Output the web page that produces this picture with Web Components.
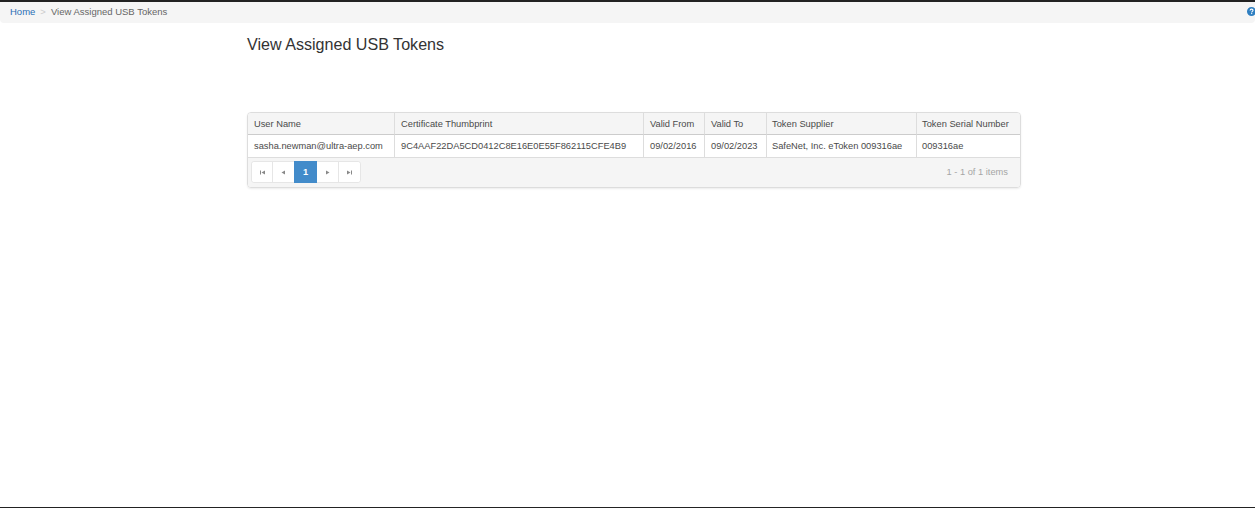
<!DOCTYPE html>
<html>
<head>
<meta charset="utf-8">
<title>View Assigned USB Tokens</title>
<style>
html, body { margin: 0; padding: 0; height: 100%; overflow: hidden; background: #fff; }
body { font-family: "Liberation Sans", Arial, sans-serif; font-size: 10px; color: #333; }
</style>
</head>
<body>
<app-shell>
    <bread-crumb current="View Assigned USB Tokens"></bread-crumb>
    <token-view heading="View Assigned USB Tokens"></token-view>
</app-shell>

<script>
class AppShell extends HTMLElement {
    constructor() {
        super()
        this.attachShadow({ mode: 'open' }).innerHTML = `
    <style>
        :host { display: flex; flex-direction: column; height: 508px; box-sizing: border-box;
                border-top: 2px solid #222; border-bottom: 1px solid #222; }
    </style>
    <slot></slot>`
    }
}

class BreadCrumb extends HTMLElement {
    constructor() {
        super()
        this.attachShadow({ mode: 'open' }).innerHTML = `
    <style>
        :host { display: flex; align-items: center; height: 21px; box-sizing: border-box; padding: 0 0 2px 10px; background: #f5f5f5;
                border-radius: 0 0 4px 4px; font-size: 9.5px; color: #666; }
        a { color: #2a6fb5; text-decoration: none; }
        .sep { color: #ccc; margin: 0 5px 0 5px; }
        .help { margin-left: auto; width: 9px; height: 9px; margin-right: -1px; display: block; }
    </style>
    <a href="#">Home</a><span class="sep">&gt;</span><span>${this.getAttribute('current')}</span>
    <svg class="help" viewBox="0 0 10 10"><circle cx="5" cy="5" r="5" fill="#2f7fc1"/><path d="M3.4 3.9C3.5 2.9 4.2 2.4 5.1 2.4 6.1 2.4 6.7 3 6.7 3.7 6.7 4.9 5.2 4.9 5.2 6" fill="none" stroke="#fff" stroke-width="1.2"/><rect x="4.6" y="6.7" width="1.2" height="1.2" fill="#fff"/></svg>`
    }
}

class TokenView extends HTMLElement {
    constructor() {
        super()
        this.attachShadow({ mode: 'open' }).innerHTML = `
    <style>
        :host { display: block; width: 774px; margin: 0 0 0 247px; }
        h1 { font-size: 16.1px; font-weight: 400; line-height: 20px; margin: 11px 0 58px; color: #333; }
    </style>
    <h1>${this.getAttribute('heading')}</h1>
    <token-grid></token-grid>`
    }
}

const columns = [
    ['User Name', 'sasha.newman@ultra-aep.com', 146],
    ['Certificate Thumbprint', '9C4AAF22DA5CD0412C8E16E0E55F862115CFE4B9', 249],
    ['Valid From', '09/02/2016', 61],
    ['Valid To', '09/02/2023', 62],
    ['Token Supplier', 'SafeNet, Inc. eToken 009316ae', 150],
    ['Token Serial Number', '009316ae', 104]
]

class TokenGrid extends HTMLElement {
    constructor() {
        super()
        const cols = columns.map(c => `<col style="width:${c[2]}px">`).join('')
        const head = columns.map(c => `<th>${c[0]}</th>`).join('')
        const row = columns.map(c => `<td>${c[1]}</td>`).join('')
        this.attachShadow({ mode: 'open' }).innerHTML = `
    <style>
        :host { display: block; box-sizing: border-box; border: 1px solid #ddd; border-radius: 4px;
                overflow: hidden; font-size: 9.3px; color: #4a4a4a; box-shadow: 0 1px 2px rgba(0,0,0,.08); }
        table { border-collapse: separate; border-spacing: 0; table-layout: fixed; width: 772px; }
        th, td { padding: 0 0 0 6px; text-align: left; font-weight: 400; white-space: nowrap;
                 border-left: 1px solid #ddd; box-sizing: border-box; overflow: hidden; }
        th:first-child, td:first-child { border-left: 0; }
        th:nth-child(n+5), td:nth-child(n+5) { padding-left: 5px; }
        th { height: 22px; background: #f5f5f5; border-bottom: 1px solid #ccc; }
        td { height: 23px; background: #fff; border-bottom: 1px solid #ddd; }
        footer { display: flex; align-items: center; justify-content: space-between; height: 29px; box-sizing: border-box;
                 background: #f5f5f5; padding: 0 12px 1px 3px; color: #a5a5a5; }
    </style>
    <table><colgroup>${cols}</colgroup><thead><tr>${head}</tr></thead><tbody><tr>${row}</tr></tbody></table>
    <footer><grid-pager></grid-pager><span>1 - 1 of 1 items</span></footer>`
    }
}

class GridPager extends HTMLElement {
    constructor() {
        super()
        const btn = d => `<button><svg width="7" height="7" viewBox="0 0 7 7"><path d="${d}" fill="#888"/></svg></button>`
        this.attachShadow({ mode: 'open' }).innerHTML = `
    <style>
        :host { display: flex; height: 22px; box-sizing: border-box; background: #fff; border: 1px solid #e6e6e6; border-radius: 3px; }
        button { width: 22px; padding: 0; margin: 0; background: #fff; border: 0; border-left: 1px solid #e6e6e6;
                 display: flex; align-items: center; justify-content: center; font: inherit; }
        button:first-of-type { border-left: 0; width: 20px; border-radius: 3px 0 0 3px; }
        button:last-of-type { border-radius: 0 3px 3px 0; }
        .on { background: #428bca; color: #fff; font-weight: 700; border-left: 0; width: 23px; margin: -1px 0; }
        .on + button { border-left: 0; width: 21px; }
    </style>
    ${btn('M1 1.5h1v4H1zM6 1.5v4L2.5 3.5z')}
    ${btn('M5 1.5v4L1.5 3.5z')}
    <button class="on">1</button>
    ${btn('M2 1.5v4L5.5 3.5z')}
    ${btn('M1 1.5v4L4.5 3.5zM5 1.5h1v4H5z')}`
    }
}

customElements.define('app-shell', AppShell)
customElements.define('bread-crumb', BreadCrumb)
customElements.define('token-view', TokenView)
customElements.define('token-grid', TokenGrid)
customElements.define('grid-pager', GridPager)
</script>
</body>
</html>
